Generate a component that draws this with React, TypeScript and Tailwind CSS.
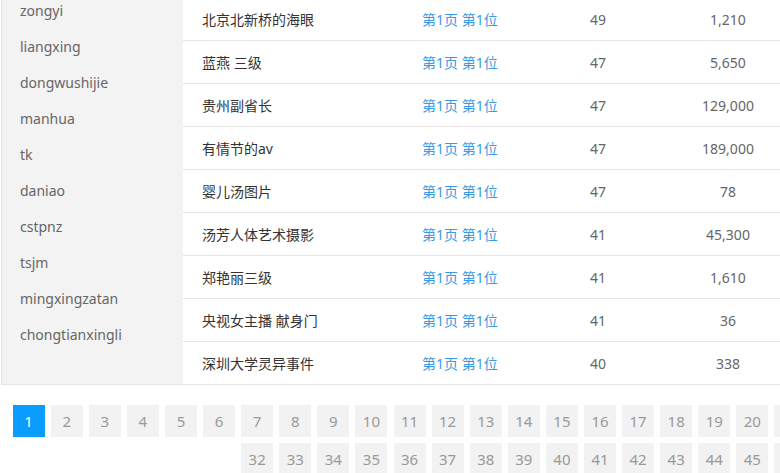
import React from "react";

const channels = [
  "zongyi",
  "liangxing",
  "dongwushijie",
  "manhua",
  "tk",
  "daniao",
  "cstpnz",
  "tsjm",
  "mingxingzatan",
  "chongtianxingli",
];

const rows = [
  { word: "北京北新桥的海眼", rank: "49", count: "1,210" },
  { word: "蓝燕 三级", rank: "47", count: "5,650" },
  { word: "贵州副省长", rank: "47", count: "129,000" },
  { word: "有情节的av", rank: "47", count: "189,000" },
  { word: "婴儿汤图片", rank: "47", count: "78" },
  { word: "汤芳人体艺术摄影", rank: "41", count: "45,300" },
  { word: "郑艳丽三级", rank: "41", count: "1,610" },
  { word: "央视女主播 献身门", rank: "41", count: "36" },
  { word: "深圳大学灵异事件", rank: "40", count: "338" },
];

const pages = Array.from({ length: 50 }, (_, i) => i + 1);

export default function App() {
  return (
    <div className="w-[780px] h-[473px] overflow-hidden bg-white font-['Noto_Sans','Noto_Sans_CJK_SC',sans-serif] text-[14px]">
      <div className="-mt-[8px] w-[1200px]">
        {/* sidebar + keyword table */}
        <div className="ml-px flex border-l border-b border-[#e5e5e5]">
          <ul className="w-[181px] shrink-0 bg-[#f3f3f3]">
            {channels.map((c) => (
              <li key={c} className="h-9 pl-[18px] flex items-center text-[#666]">
                {c}
              </li>
            ))}
          </ul>
          <div className="flex-1 pt-[6px]">
            {rows.map((r, i) => (
              <div
                key={r.word}
                className={`flex items-center ${
                  i < rows.length - 1 ? "h-[43px] border-b border-[#e5e5e5]" : "h-[42px]"
                }`}
              >
                <div className="w-[239px] pl-[19px] text-[#333]">{r.word}</div>
                <div className="w-[132px] text-[#3a9be5]">第1页 第1位</div>
                <div className="w-[88px] text-center text-[#666]">{r.rank}</div>
                <div className="w-[172px] text-center text-[#666]">{r.count}</div>
              </div>
            ))}
          </div>
        </div>

        {/* pagination */}
        <div className="mt-5 ml-3 w-[1176px] flex flex-wrap justify-center gap-x-[6.1px] gap-y-[6px]">
          {pages.map((p) => (
            <span
              key={p}
              className={`w-8 h-8 flex items-center justify-center text-[15px] ${
                p === 1 ? "bg-[#0a9cff] text-white" : "bg-[#f2f2f2] text-[#999]"
              }`}
            >
              {p}
            </span>
          ))}
        </div>
      </div>
    </div>
  );
}
